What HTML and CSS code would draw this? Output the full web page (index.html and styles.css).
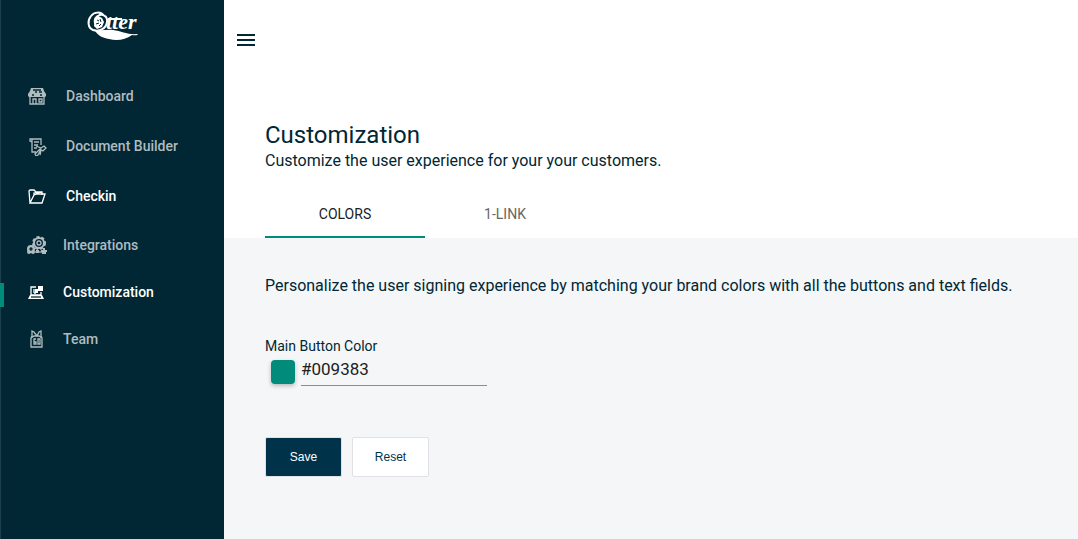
FILE: index.html
```
<!DOCTYPE html>
<html lang="en">

<head>
    <meta charset="UTF-8">
    <meta name="viewport" content="width=device-width, initial-scale=1.0">
    <title>Customization</title>
    <link rel="stylesheet" href="styles.css">
</head>

<body>

    <aside class="sidebar">
        <a href="#" class="logo">
            <svg width="54" height="32" viewBox="0 0 54 32" role="img" aria-label="Otter">
                <path class="logo-ring" d="M18 6C15 1 8 2 5 6c-4 5-3 12 2 14 6 2 13-1 14-8 1-6-5-9-9-6-4 2-4 7-2 9" />
                <path class="logo-fur" d="M9 9l3-3 4 2 2 4-2 5-5 2-3-3z" />
                <path class="logo-line" d="M11 10l2 1M14 9l1 3M10 14l3-1M13 16l2-2" />
                <text class="logo-text" x="20" y="19">tter</text>
                <path class="logo-line" d="M22 9h14" />
                <path class="logo-tail" d="M8 19c6 3 12 0 19 1 9 1 14 5 25 4-1 2-4 1-6 1-7 5-15 6-23 4-7-1-12-4-15-10z" />
            </svg>
        </a>
        <nav>
            <ul class="nav-list">
                <li>
                    <a href="#" class="nav-link">
                        <svg class="nav-icon" viewBox="0 0 20 20">
                            <path class="solid" d="M4 2h12l1 3 2 3v2l-1 1H2l-1-1V8l2-3z" />
                            <path class="cut" d="M6 4h8M8 6h2M12 6h3M5 9h2M13 9h2" />
                            <path d="M3 11v7h14v-7M6 18v-5h3v5M12 13h3v3h-3z" />
                        </svg>
                        <span>Dashboard</span>
                    </a>
                </li>
                <li>
                    <a href="#" class="nav-link">
                        <svg class="nav-icon" viewBox="0 0 20 20">
                            <path d="M9 16H5V6L3 5V3h11v6M5 3v3M7 6h5M7 9h4M7 12h3" />
                            <path d="M9 10l5 2 3-2 2 2-3 3-3-2-5 5 1 2 2-1 3-6M14 14l-1 5" />
                        </svg>
                        <span>Document Builder</span>
                    </a>
                </li>
                <li>
                    <a href="#" class="nav-link current">
                        <svg class="nav-icon" viewBox="0 0 20 20">
                            <path d="M3 17L2 5l1-1h4l2 2h6v3M3 17L7 9l3-1h8l-3 9zM7 9V7l8-1" />
                        </svg>
                        <span>Checkin</span>
                    </a>
                </li>
            </ul>
            <ul class="nav-list compact">
                <li>
                    <a href="#" class="nav-link">
                        <svg class="nav-icon" viewBox="0 0 20 20">
                            <circle class="ring" cx="12" cy="8" r="5" />
                            <circle class="gear" cx="12" cy="8" r="6" />
                            <circle cx="12" cy="8" r="2" />
                            <circle class="solid" cx="4" cy="14" r="4" />
                            <circle class="solid" cx="2" cy="17" r="2" />
                            <circle class="solid" cx="6" cy="17" r="2" />
                            <circle class="cut" cx="4" cy="14" r="1" />
                            <path class="solid" d="M9 15h3v3H9zM16 13h2v2h2v2h-1v2h-4v-2h-1v-2h2z" />
                            <path d="M8 17h9" />
                        </svg>
                        <span>Integrations</span>
                    </a>
                </li>
                <li>
                    <a href="#" class="nav-link current selected">
                        <svg class="nav-icon" viewBox="0 0 20 20">
                            <path d="M4 13V5h5M4 13h10v-3M7 7v4M7 11h2" />
                            <path class="solid" d="M11 4h5v5h-5zM8 7h3v4H8zM3 13h12l2 4H1z" />
                            <path class="cut" d="M4 15h10" />
                        </svg>
                        <span>Customization</span>
                    </a>
                </li>
                <li>
                    <a href="#" class="nav-link">
                        <svg class="nav-icon" viewBox="0 0 20 20">
                            <path d="M5 2v5l-1 2v9h11V9l-1-2V2l-2 1-2 4-3-4zM4 9l3-2h5l3 2" />
                            <path d="M9 10H7v5h2v-2H7M11 10h2v5h-2z" />
                        </svg>
                        <span>Team</span>
                    </a>
                </li>
            </ul>
        </nav>
    </aside>

    <main class="content">
        <header class="page-header">
            <button type="button" class="menu-button" aria-label="Menu">
                <svg width="18" height="12" viewBox="0 0 18 12">
                    <path d="M0 0h18v2H0zM0 5h18v2H0zM0 10h18v2H0z" />
                </svg>
            </button>
            <h1>Customization</h1>
            <p class="subtitle">Customize the user experience for your your customers.</p>
            <div class="tabs" role="tablist">
                <button type="button" class="tab active" role="tab" aria-selected="true">COLORS</button>
                <button type="button" class="tab" role="tab" aria-selected="false">1-LINK</button>
            </div>
        </header>

        <form class="color-form">
            <p class="intro">Personalize the user signing experience by matching your brand colors with all the buttons and text fields.</p>
            <label for="mainColor">Main Button Color</label>
            <div class="color-field">
                <button type="button" class="swatch" aria-label="Pick color"></button>
                <input type="text" id="mainColor" name="mainColor" value="#009383">
            </div>
            <div class="actions">
                <button type="submit" class="save-button">Save</button>
                <button type="reset" class="reset-button">Reset</button>
            </div>
        </form>
    </main>

</body>

</html>
```

FILE: styles.css
```
* {
    box-sizing: border-box;
}

body {
    margin: 0;
    min-height: 100vh;
    display: flex;
    font-family: Roboto, "Liberation Sans", sans-serif;
    font-size: 16px;
    line-height: 24px;
    color: #002733;
    background-color: #f4f6f8;
}

h1,
p,
ul {
    margin: 0;
    padding: 0;
}

button {
    border: none;
    cursor: pointer;
}

/* Sidebar */
.sidebar {
    width: 224px;
    flex-shrink: 0;
    background-color: #002733;
    border-left: 1px solid #1d404a;
}

.logo {
    display: flex;
    justify-content: center;
    padding-top: 10px;
    height: 71px;
}

.logo-text {
    font-family: "Liberation Serif", serif;
    font-size: 22px;
    font-weight: bold;
    font-style: italic;
    fill: #fff;
}

.logo-ring {
    fill: none;
    stroke: #fff;
    stroke-width: 2;
}

.logo-fur,
.logo-tail {
    fill: #fff;
}

.logo-line {
    fill: none;
    stroke: #002733;
    stroke-width: 1;
}

.logo-text + .logo-line {
    stroke: #fff;
    stroke-width: 2;
}

.nav-list {
    list-style: none;
}

.nav-link {
    position: relative;
    display: flex;
    align-items: center;
    gap: 19px;
    height: 50px;
    padding-left: 26px;
    font-size: 14px;
    font-weight: 500;
    color: #b0bcc0;
    text-decoration: none;
}

.compact .nav-link {
    height: 47px;
    gap: 16px;
}

.nav-link.current {
    color: #fff;
}

/* marker on the left edge of the open page */
.selected::before {
    content: "";
    position: absolute;
    left: -1px;
    top: 15px;
    width: 4px;
    height: 24px;
    background-color: #008b7a;
}

.nav-icon {
    width: 20px;
    height: 20px;
    fill: none;
    stroke: currentColor;
    stroke-width: 1.3;
}

.nav-icon .solid {
    fill: currentColor;
    stroke: none;
}

.nav-icon .cut {
    stroke: #002733;
}

.nav-icon .ring {
    stroke-width: 2;
}

.nav-icon .gear {
    stroke-width: 2;
    stroke-dasharray: 3 2;
}

/* Main area */
.content {
    flex: 1;
    min-width: 0;
}

.page-header {
    padding: 28px 41px 0;
    background-color: #fff;
}

.menu-button {
    display: flex;
    align-items: center;
    justify-content: center;
    width: 24px;
    height: 24px;
    margin-left: -31px;
    margin-bottom: 68px;
    padding: 0;
    background: none;
}

.menu-button path {
    fill: #002733;
}

h1 {
    font-size: 24px;
    font-weight: 400;
    line-height: 30px;
}

.subtitle {
    line-height: 22px;
    margin-bottom: 18px;
}

.tabs {
    display: flex;
}

.tab {
    width: 160px;
    height: 48px;
    padding: 2px 0 0;
    border-bottom: 2px solid transparent;
    background: none;
    font-family: inherit;
    font-size: 14px;
    color: #666;
}

.tab.active {
    border-bottom-color: #008b7a;
    color: #212121;
}

.color-form {
    padding: 36px 41px;
}

.intro {
    margin-bottom: 38px;
}

.color-form label {
    display: block;
    font-size: 14px;
    line-height: 20px;
}

.color-field {
    display: flex;
    align-items: flex-end;
    gap: 6px;
    padding-left: 6px;
    margin-bottom: 51px;
}

.swatch {
    width: 24px;
    height: 24px;
    margin-bottom: 2px;
    border-radius: 4px;
    background-color: #008b7a;
    box-shadow: 0 2px 4px rgba(0, 0, 0, 0.25);
}

.color-field input {
    width: 186px;
    height: 30px;
    padding: 0 0 4px;
    border: none;
    border-bottom: 1px solid #8c8d8e;
    background: none;
    font-family: inherit;
    font-size: 17px;
    color: #212121;
    outline: none;
}

.actions {
    display: flex;
    gap: 10px;
}

.save-button,
.reset-button {
    width: 77px;
    height: 40px;
    border: 1px solid #dfe1e4;
    border-radius: 2px;
    font-family: "Liberation Sans", Arial, sans-serif;
    font-size: 12px;
}

.save-button {
    background-color: #003349;
    color: #fff;
}

.reset-button {
    background-color: #fff;
    color: #003349;
}
```
